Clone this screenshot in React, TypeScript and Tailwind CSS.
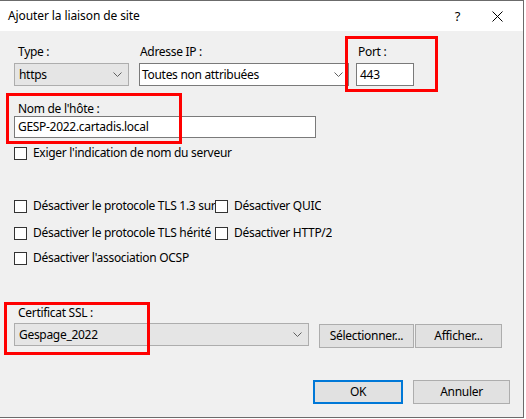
import React from "react";

function Chevron() {
  return (
    <svg width="9" height="5" viewBox="0 0 9 5" className="shrink-0">
      <path d="M0.5 0.5 L4.5 4.5 L8.5 0.5" fill="none" stroke="#606060" strokeWidth="1" />
    </svg>
  );
}

function Check({ label, width }: { label: string; width?: string }) {
  return (
    <div className={`flex items-center gap-[6px] overflow-hidden whitespace-nowrap ${width ?? ""}`}>
      <span className="w-[13px] h-[13px] shrink-0 border border-[#333333] bg-white" />
      <span>{label}</span>
    </div>
  );
}

export default function App() {
  return (
    <div
      className="w-[526px] h-[419px] bg-white text-[12px] leading-[16px] tracking-[-0.3px] text-black"
      style={{ fontFamily: '"Noto Sans", "Open Sans", sans-serif' }}
    >
      <div className="relative w-[524px] h-[418px] border-t border-r border-b border-[#6b6b6b] flex flex-col bg-[#f0f0f0]">
        {/* Barre de titre */}
        <div className="h-[30px] bg-white flex items-center pl-[8px] pr-[20px] shrink-0">
          <span className="flex-1 tracking-[-0.1px]">Ajouter la liaison de site</span>
          <span className="mr-[32px] text-[13px]">?</span>
          <svg width="11" height="11" viewBox="0 0 11 11">
            <path d="M0.5 0.5 L10.5 10.5 M10.5 0.5 L0.5 10.5" stroke="#000" strokeWidth="1" />
          </svg>
        </div>

        <div className="flex flex-col pl-[14px] pt-[13px]">
          {/* Type / Adresse IP / Port */}
          <div className="flex items-end">
            <div className="flex flex-col w-[115px]">
              <span className="pl-[4px] mb-[3px]">Type :</span>
              <div className="h-[23px] border border-[#adadad] bg-[#e5e5e5] flex items-center pl-[4px] pr-[6px]">
                <span className="flex-1">https</span>
                <Chevron />
              </div>
            </div>
            <div className="flex flex-col w-[210px] ml-[10px]">
              <span className="pl-[1px] mb-[3px]">Adresse IP :</span>
              <div className="h-[23px] border border-[#7a7a7a] bg-white flex items-center pl-[2px] pr-[5px]">
                <span className="flex-1">Toutes non attribuées</span>
                <Chevron />
              </div>
            </div>
            <div className="flex flex-col w-[58px] ml-[7px]">
              <span className="pl-[2px] mb-[3px]">Port :</span>
              <div className="h-[23px] border border-[#7a7a7a] bg-white flex items-center pl-[3px]">443</div>
            </div>
          </div>

          {/* Nom de l'hôte */}
          <span className="pl-[4px] mt-[15px] mb-[-3px]">Nom de l&apos;hôte :</span>
          <div className="mt-[2px] w-[302px] h-[22px] border border-[#7a7a7a] bg-white flex items-center pl-[3px]">
            GESP-2022.cartadis.local
          </div>

          <div className="mt-[7px]">
            <Check label="Exiger l'indication de nom du serveur" />
          </div>

          {/* Options TLS */}
          <div className="mt-[37px] flex flex-col gap-[11px]">
            <div className="flex">
              <Check label="Désactiver le protocole TLS 1.3 sur TCP" width="w-[201px]" />
              <Check label="Désactiver QUIC" />
            </div>
            <div className="flex">
              <Check label="Désactiver le protocole TLS hérité" width="w-[201px]" />
              <Check label="Désactiver HTTP/2" />
            </div>
            <div className="-mt-[2px]">
              <Check label="Désactiver l'association OCSP" />
            </div>
          </div>

          {/* Certificat SSL */}
          <span className="pl-[4px] mt-[39px]">Certificat SSL :</span>
          <div className="mt-[2px] flex items-start">
            <div className="w-[295px] h-[23px] border border-[#adadad] bg-[#e5e5e5] flex items-center pl-[4px] pr-[6px]">
              <span className="flex-1">Gespage_2022</span>
              <Chevron />
            </div>
            <button className="ml-[10px] mt-[1px] w-[95px] h-[24px] border border-[#adadad] bg-[#e1e1e1]">
              Sélectionner...
            </button>
            <button className="ml-[1px] mt-[1px] w-[87px] h-[24px] border border-[#adadad] bg-[#e1e1e1]">
              Afficher...
            </button>
          </div>

          {/* OK / Annuler */}
          <div className="mt-[32px] flex justify-end pr-[13px] gap-[10px]">
            <button className="w-[90px] h-[24px] border-2 border-[#0078d7] bg-[#e1e1e1]">OK</button>
            <button className="w-[97px] h-[24px] border border-[#adadad] bg-[#e1e1e1]">Annuler</button>
          </div>
        </div>

        {/* Encadrés rouges d'annotation */}
        <div className="absolute left-[345px] top-[35px] w-[93px] h-[56px] border-[3px] border-[#ff0000]" />
        <div className="absolute left-[6px] top-[92px] w-[176px] h-[51px] border-[3px] border-[#ff0000]" />
        <div className="absolute left-[4px] top-[301px] w-[146px] h-[53px] border-[3px] border-[#ff0000]" />
      </div>
    </div>
  );
}
